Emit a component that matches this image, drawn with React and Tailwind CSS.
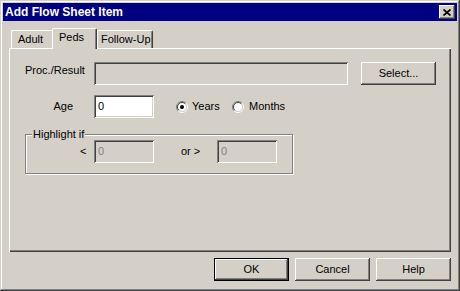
import React from 'react';

// Windows-classic bevels
const raised = 'shadow-[inset_-1px_-1px_#404040,inset_1px_1px_#ffffff,inset_-2px_-2px_#808080,inset_2px_2px_#d4d0c8]';
const defaultBtn = 'shadow-[inset_0_0_0_1px_#000000,inset_-2px_-2px_#404040,inset_2px_2px_#ffffff,inset_-3px_-3px_#808080]';
const sunken = 'shadow-[inset_1px_1px_#808080,inset_-1px_-1px_#ffffff,inset_2px_2px_#404040,inset_-2px_-2px_#d4d0c8]';

const Radio = ({ checked }) => (
  <svg width="12" height="12" viewBox="0 0 12 12" className="shrink-0">
    <circle cx="6" cy="6" r="4.5" fill="#ffffff" />
    <path d="M2.1 9.9A5.5 5.5 0 0 1 9.9 2.1" stroke="#808080" fill="none" />
    <path d="M9.9 2.1A5.5 5.5 0 0 1 2.1 9.9" stroke="#ffffff" fill="none" />
    <path d="M2.8 9.2A4.5 4.5 0 0 1 9.2 2.8" stroke="#404040" fill="none" />
    <path d="M9.2 2.8A4.5 4.5 0 0 1 2.8 9.2" stroke="#d4d0c8" fill="none" />
    {checked && <circle cx="6" cy="6" r="2" fill="#000000" />}
  </svg>
);

const Button = ({ label, isDefault, className = '' }) => (
  <div className={`flex items-center justify-center bg-[#d4d0c8] text-black ${isDefault ? defaultBtn : raised} ${className}`}>
    {label}
  </div>
);

const Field = ({ value, disabled, className = '' }) => (
  <div className={`flex items-center pl-[4px] h-[23px] ${disabled ? 'bg-[#d4d0c8] text-[#808080]' : 'bg-white text-black'} ${sunken} ${className}`}>
    {value}
  </div>
);

export default function App() {
  return (
    <div
      className="w-[460px] h-[291px] bg-[#d4d0c8] p-[3px] flex flex-col text-[11px] text-black shadow-[inset_-1px_-1px_#404040,inset_1px_1px_#d4d0c8,inset_-2px_-2px_#808080,inset_2px_2px_#ffffff]"
      style={{ fontFamily: '"Liberation Sans", Arial, sans-serif' }}
    >
      {/* Title bar */}
      <div className="h-[18px] bg-[#000080] flex items-center justify-between pl-[2px] pr-[2px]">
        <span className="text-white font-bold text-[12px] leading-none">Add Flow Sheet Item</span>
        <div className={`w-[16px] h-[14px] bg-[#d4d0c8] flex items-center justify-center ${raised}`}>
          <svg width="8" height="7" viewBox="0 0 8 7">
            <path d="M0.5 0.5L7.5 6.5M7.5 0.5L0.5 6.5" stroke="#000000" strokeWidth="1.7" />
          </svg>
        </div>
      </div>

      {/* Tabs */}
      <div className="mt-[7px] ml-[8px] h-[20px] flex items-end relative z-10">
        <div className="w-[41px] h-[18px] pl-[6px] flex items-center border-l border-t border-white rounded-tl-[2px]">
          Adult
        </div>
        <div className="w-[45px] h-[21px] -mb-px pl-[6px] pb-[3px] flex items-center bg-[#d4d0c8] border-l border-t border-white border-r border-r-[#404040] rounded-t-[2px] shadow-[inset_-1px_0_#808080]">
          Peds
        </div>
        <div className="w-[56px] h-[18px] pl-[3px] flex items-center border-l border-t border-white border-r border-r-[#404040] rounded-t-[2px] shadow-[inset_-1px_0_#808080]">
          Follow-Up
        </div>
      </div>

      {/* Tab panel */}
      <div className="ml-[6px] w-[442px] h-[204px] shadow-[inset_1px_1px_#ffffff,inset_-1px_-1px_#404040,inset_-2px_-2px_#808080] pt-[14px]">
        <div className="flex items-center h-[22px]">
          <span className="w-[85px] pl-[16px] -mt-[5px]">Proc./Result</span>
          <Field disabled className="w-[254px] h-[22px]" value="" />
          <Button label="Select..." className="ml-[13px] w-[75px] h-[23px]" />
        </div>

        <div className="flex items-center h-[23px] mt-[11px]">
          <span className="w-[64px] text-right">Age</span>
          <Field value="0" className="ml-[21px] w-[60px]" />
          <div className="ml-[22px] w-[56px] flex items-center gap-[4px]">
            <Radio checked />
            <span>Years</span>
          </div>
          <div className="flex items-center gap-[5px]">
            <Radio />
            <span>Months</span>
          </div>
        </div>

        {/* Highlight group */}
        <div className="relative ml-[16px] mt-[16px] w-[268px] h-[40px] border border-[#808080] shadow-[inset_1px_1px_#ffffff,1px_1px_#ffffff]">
          <span className="absolute -top-[8px] left-[6px] bg-[#d4d0c8] px-[1px] leading-[14px]">Highlight if</span>
          <div className="flex items-center mt-[5px]">
            <span className="ml-[54px] w-[14px]">&lt;</span>
            <Field disabled value="0" className="w-[60px]" />
            <span className="ml-[27px] w-[36px]">or &gt;</span>
            <Field disabled value="0" className="w-[60px]" />
          </div>
        </div>
      </div>

      {/* Footer buttons */}
      <div className="mt-[6px] flex justify-end gap-[6px] pr-[6px]">
        <Button label="OK" isDefault className="w-[75px] h-[23px]" />
        <Button label="Cancel" className="w-[75px] h-[23px]" />
        <Button label="Help" className="w-[75px] h-[23px]" />
      </div>
    </div>
  );
}
